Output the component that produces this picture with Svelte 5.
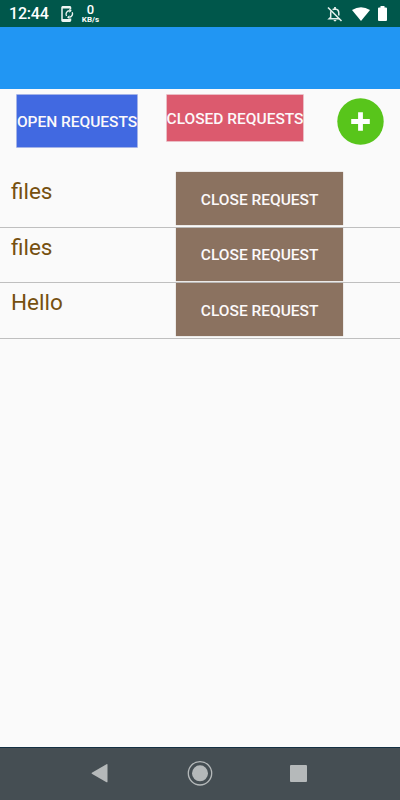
<script>
  const requests = [
    { id: 1, name: 'files' },
    { id: 2, name: 'files' },
    { id: 3, name: 'Hello' }
  ];
</script>

<div class="screen">
  <header class="status">
    <span class="time">12:44</span>
    <svg class="sync" width="14" height="16" viewBox="0 0 14 16" fill="none" stroke="#eef5f3">
      <path d="M9.500 3.500V1.500Q9.500 .8 8.800 .8H1.700Q1 .8 1 1.500V14.500Q1 15.200 1.700 15.200H8.800Q9.500 15.200 9.500 14.500V12.500" stroke-width="1.500" />
      <path d="M1 1.500H9.500M1 14H9.500" stroke-width="2" />
      <path d="M5.500 10A3.500 3.500 0 0 1 8.500 4.700M11.200 6.200A3.500 3.500 0 0 1 8.500 11.200" stroke-width="1.400" />
      <path d="M8.300 2.700L10.800 4.700L8.300 6.700ZM8.500 9.200L6 11.200L8.500 13.200Z" fill="#eef5f3" stroke="none" />
    </svg>
    <div class="speed">
      <span class="rate">0</span>
      <span class="unit">KB/s</span>
    </div>
    <div class="indicators">
      <svg width="16" height="16" viewBox="0 0 16 16" fill="none" stroke="#e4efec">
        <path d="M5.600 3.600Q6.500 2.900 8 2.900Q11.800 3.100 11.800 7V9.500M4.200 5.200Q3.700 6 3.700 7V11.300L2.200 12.700H12.500" stroke-width="1.500" />
        <path d="M8 1V3" stroke-width="1.800" />
        <path d="M6.500 14H9.500Q9.300 15.400 8 15.400Q6.700 15.400 6.500 14Z" fill="#e4efec" stroke="none" />
        <path d="M1 1.500L14.500 15" stroke-width="1.600" />
      </svg>
      <svg width="18" height="14" viewBox="0 0 18 14">
        <path d="M0 3Q9-2.600 18 3L9 14Z" fill="#fff" />
      </svg>
      <svg width="9" height="15" viewBox="0 0 9 15">
        <path d="M2.500 0H6.500V1.500H8Q9 1.500 9 2.500V14Q9 15 8 15H1Q0 15 0 14V2.500Q0 1.500 1 1.500H2.500Z" fill="#fff" />
      </svg>
    </div>
  </header>

  <div class="appbar"></div>

  <main>
    <div class="actions">
      <button class="open">OPEN REQUESTS</button>
      <button class="closed">CLOSED REQUESTS</button>
      <button class="add" aria-label="Add request">
        <svg width="47" height="47" viewBox="0 0 47 47">
          <circle cx="23.500" cy="23.500" r="23.200" fill="#58c51b" />
          <path d="M23.500 14.200V32.800M14.200 23.500H32.800" stroke="#fff" stroke-width="4.800" />
        </svg>
      </button>
    </div>

    <ul>
      {#each requests as request (request.id)}
        <li>
          <span class="name">{request.name}</span>
          <button class="close">CLOSE REQUEST</button>
        </li>
      {/each}
    </ul>
  </main>

  <nav>
    <svg width="400" height="53" viewBox="0 0 400 53" fill="#b5b9ba">
      <path d="M91.800 25.700Q91.300 26.200 91.800 26.700L106.500 35.200Q107.500 35.600 107.500 34.700V17.700Q107.500 16.800 106.500 17.200Z" />
      <circle cx="200" cy="26.300" r="11.700" fill="none" stroke="#b5b9ba" stroke-width="1.300" />
      <circle cx="200" cy="26.300" r="8" />
      <rect x="290" y="18" width="17" height="17" rx="1" />
    </svg>
  </nav>
</div>

<style>
  :global(body) { background: #fafafa; }
  .screen {
    width: 400px; height: 800px; overflow: hidden;
    display: flex; flex-direction: column;
    background: #fafafa; font-family: Roboto, sans-serif;
  }
  .status {
    height: 27px; flex: none; box-sizing: border-box; padding: 0 13px 0 9px;
    display: flex; align-items: center;
    background: #00574b; color: #fff;
  }
  .time {
    width: 52px; padding-top: 1px;
    font-size: 16px; line-height: 20px; font-weight: 500; letter-spacing: -0.2px;
  }
  .sync { flex: none; }
  .speed {
    width: 20px; margin-left: 5.5px;
    display: flex; flex-direction: column; align-items: center;
  }
  .rate { font-size: 13px; line-height: 12px; font-weight: 500; }
  .unit { font-size: 8px; line-height: 7px; font-weight: 700; }
  .indicators { margin-left: auto; display: flex; align-items: center; gap: 8.5px; }

  .appbar { height: 62px; flex: none; background: #2196f3; }

  main { flex: 1; }
  button {
    border: 0; padding: 2px 0 0; border-radius: 0; flex: none; box-sizing: border-box;
    display: flex; align-items: center; justify-content: center;
    font-family: inherit; font-size: 15.5px; font-weight: 500; color: #fcf9fa;
    white-space: nowrap;
  }
  .actions {
    height: 83px; box-sizing: border-box; padding: 6px 16px 0 17px;
    display: flex; align-items: flex-start;
  }
  .open {
    width: 120px; height: 52px; margin-right: 30px;
    background: #4169e1; box-shadow: 0 0 0 0.7px #7f95df;
    letter-spacing: -0.02px;
  }
  .closed {
    width: 136px; height: 46px;
    background: #dc5a6e; box-shadow: 0 0 0 0.7px #e3a3ae;
  }
  .add { padding: 0; margin: 3px 0 0 auto; background: none; }

  ul { list-style: none; margin: 0; padding: 0; }
  li {
    height: 55.5px; box-sizing: border-box; border-bottom: 1px solid #bfbfbf;
    display: flex; align-items: flex-start;
  }
  .name {
    width: 165.3px; padding-left: 11px; margin-top: 6px;
    font-size: 22.5px; line-height: 27px; color: #76500f;
  }
  .close {
    width: 166.7px; height: 53.3px;
    background: #8b7260; box-shadow: 0 0 1px #a79a90;
  }

  nav { height: 53px; flex: none; background: #454e53; box-shadow: inset 0 1px #143043; }
  nav svg { display: block; }
</style>
